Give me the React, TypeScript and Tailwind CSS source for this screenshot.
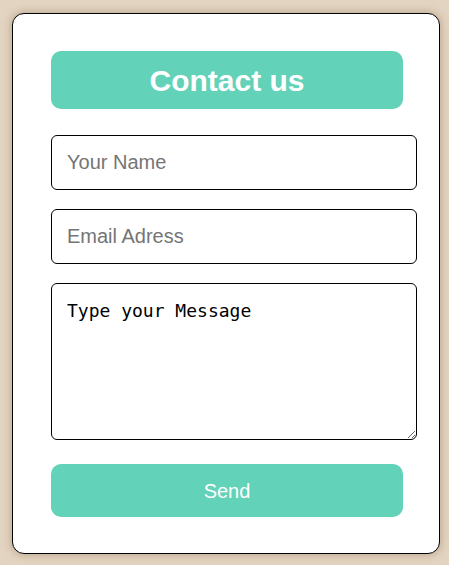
export default function App() {
  return (
    <div className="min-h-[565px] bg-[#e3d4c1] pt-[13px] pl-[12px]" style={{ fontFamily: '"Liberation Sans", Arial, sans-serif' }}>
      <form className="flex h-[541px] w-[428px] flex-col rounded-[12px] border border-black bg-white pl-[38px] pt-[37px] shadow-[0_0_10px_rgba(90,60,20,0.35)]">
        <h1 className="flex h-[58px] w-[352px] items-center justify-center rounded-[10px] bg-[#62d2b9] text-[30px] font-bold text-white">
          Contact us
        </h1>
        <input
          type="text"
          placeholder="Your Name"
          className="mt-[26px] h-[55px] w-[366px] rounded-[6px] border border-black px-[15px] text-[20px] text-black placeholder:text-[#757575] outline-none"
        />
        <input
          type="email"
          placeholder="Email Adress"
          className="mt-[19px] h-[55px] w-[366px] rounded-[6px] border border-black px-[15px] text-[20px] text-black placeholder:text-[#757575] outline-none"
        />
        <textarea
          defaultValue="Type your Message"
          className="mt-[19px] h-[157px] w-[366px] rounded-[6px] border border-black px-[15px] pt-[15px] text-[18px] leading-[24px] text-black outline-none"
          style={{ fontFamily: '"DejaVu Sans Mono", "Liberation Mono", monospace' }}
        />
        <button
          type="button"
          className="mt-[24px] h-[53px] w-[352px] rounded-[10px] bg-[#62d2b9] text-[20px] text-white"
        >
          Send
        </button>
      </form>
    </div>
  );
}
